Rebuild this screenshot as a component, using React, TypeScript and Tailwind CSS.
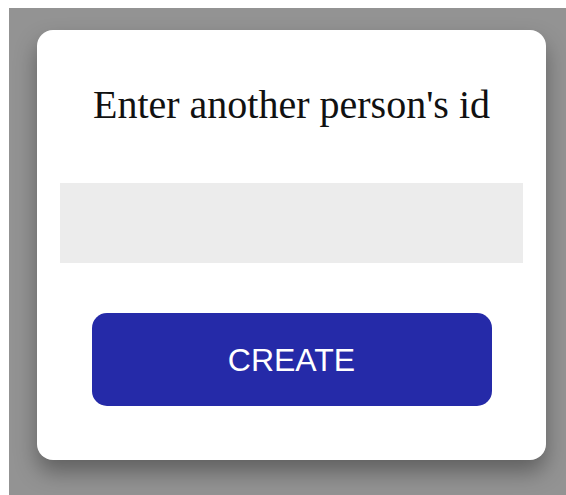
import { useState } from "react"

const App = () => {
  const [personId, setPersonId] = useState("")

  function handleCreate(e: React.FormEvent<HTMLFormElement>) {
    e.preventDefault()
  }

  return (
    <div className="min-h-screen bg-white pl-[9px] pt-[8px] overflow-hidden">
      <div className="min-h-[487px] w-[600px] bg-[#939393] pl-[28px] pt-[22px]">
        <form
          onSubmit={handleCreate}
          className="flex w-[509px] flex-col items-center rounded-[16px] bg-white px-[23px] pt-[52px] pb-[54px] shadow-[0_12px_22px_rgba(0,0,0,0.35)]"
        >
          <h2 className="text-[40px] leading-[46px] text-[#111] font-['Liberation_Serif',serif]">
            Enter another person's id
          </h2>
          <input
            value={personId}
            onChange={(e) => setPersonId(e.target.value)}
            className="mt-[55px] h-[80px] w-full bg-[#ececec] px-4 text-2xl outline-none font-['Liberation_Sans',sans-serif]"
          />
          <button
            type="submit"
            className="mt-[50px] h-[93px] w-[400px] rounded-[15px] bg-[#252aa8] text-[32px] text-white font-['Liberation_Sans',sans-serif]"
          >
            CREATE
          </button>
        </form>
      </div>
    </div>
  )
}

export default App
